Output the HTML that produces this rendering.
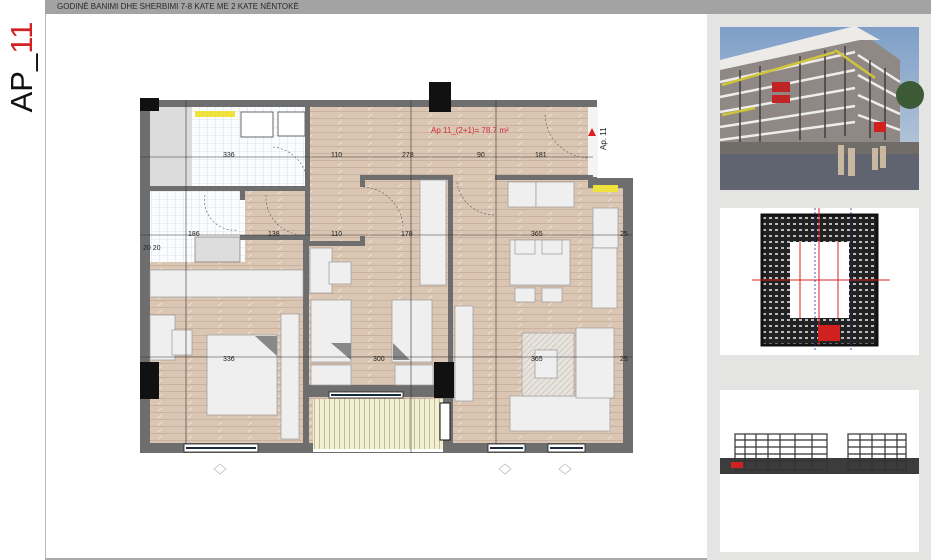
<!DOCTYPE html>
<html><head><meta charset="utf-8"><style>
html,body{margin:0;padding:0;background:#fff;width:950px;height:560px;overflow:hidden;font-family:"Liberation Sans",sans-serif}
#hdr{position:absolute;left:45px;top:0;width:886px;height:14px;background:#a3a3a3;font-size:8px;line-height:14px;color:#2a2a2a;padding-left:12px;box-sizing:border-box}
#ap{position:absolute;left:-28px;top:52px;width:100px;height:30px;transform:rotate(-90deg);font-size:31px;line-height:30px;text-align:center;color:#111}
#ap span{color:#d42020}
#main{position:absolute;left:45px;top:14px;width:662px;height:544px;border-left:1px solid #bbb;border-bottom:2px solid #aaa}
#rp{position:absolute;left:707px;top:14px;width:224px;height:546px;background:#e4e4e3}
</style></head><body>
<div id="ap">AP_<span>11</span></div>
<div id="hdr">GODINË BANIMI DHE SHERBIMI 7-8 KATE ME 2 KATE NËNTOKË</div>
<div id="main"></div>
<div id="rp"></div>
<svg width="950" height="560" style="position:absolute;left:0;top:0">
<defs>
<pattern id="wood" width="30" height="7" patternUnits="userSpaceOnUse">
<rect width="30" height="7" fill="#dbc6b4"/><line x1="0" y1="6.5" x2="30" y2="6.5" stroke="#c4ad99" stroke-width="0.8"/><line x1="8" y1="5" x2="12" y2="2" stroke="#eee2d6" stroke-width="0.8"/>
</pattern>
<pattern id="tile" width="8" height="8" patternUnits="userSpaceOnUse"><rect width="8" height="8" fill="#fbfcfd"/><path d="M8 0V8M0 8H8" stroke="#bcd0de" stroke-width="0.6"/></pattern>
<pattern id="balc" width="5" height="10" patternUnits="userSpaceOnUse"><rect width="5" height="10" fill="#f3f0cf"/><line x1="4.5" y1="0" x2="4.5" y2="10" stroke="#9a9680" stroke-width="0.6"/></pattern>
<pattern id="hatch" width="6" height="6" patternUnits="userSpaceOnUse"><rect width="6" height="6" fill="#e7e3dc"/><path d="M0 6L6 0" stroke="#bbb" stroke-width="0.6"/></pattern>
<pattern id="dense" width="6" height="6" patternUnits="userSpaceOnUse"><rect width="6" height="6" fill="#222"/><rect x="1" y="1" width="3" height="2" fill="#bbb"/></pattern>
<linearGradient id="sky" x1="0" y1="0" x2="0" y2="1"><stop offset="0" stop-color="#7f9fc8"/><stop offset="1" stop-color="#c3d0de"/></linearGradient>
</defs>
<rect x="140" y="100" width="457" height="90" fill="#6e6e6e"/>
<rect x="140" y="178" width="493" height="275" fill="#6e6e6e"/>
<rect x="150" y="107" width="438" height="336" fill="url(#wood)"/>
<rect x="450" y="188" width="173" height="255" fill="url(#wood)"/>
<rect x="588" y="107" width="10" height="70" fill="#f4f4f4"/>
<rect x="150" y="107" width="158" height="79" fill="url(#tile)"/>
<rect x="150" y="107" width="42" height="79" fill="#dcdcdc"/>
<rect x="150" y="190" width="95" height="72" fill="url(#tile)"/>
<rect x="195" y="237" width="45" height="25" fill="#ddd" stroke="#666" stroke-width="0.6"/>
<rect x="241" y="112" width="32" height="25" fill="#fff" stroke="#444" stroke-width="0.8"/>
<rect x="278" y="112" width="27" height="24" fill="#fff" stroke="#444" stroke-width="0.8"/>
<rect x="195" y="111" width="40" height="6" fill="#efe23c"/>
<rect x="593" y="185" width="25" height="7" fill="#efe23c"/>
<rect x="305" y="107" width="5" height="135" fill="#6e6e6e"/>
<rect x="150" y="186" width="160" height="5" fill="#6e6e6e"/>
<rect x="240" y="190" width="5" height="10" fill="#6e6e6e"/>
<rect x="240" y="235" width="70" height="5" fill="#6e6e6e"/>
<rect x="303" y="240" width="6" height="205" fill="#6e6e6e"/>
<rect x="360" y="175" width="88" height="5" fill="#6e6e6e"/>
<rect x="360" y="175" width="5" height="12" fill="#6e6e6e"/>
<rect x="360" y="236" width="5" height="10" fill="#6e6e6e"/>
<rect x="309" y="241" width="56" height="5" fill="#6e6e6e"/>
<rect x="448" y="175" width="5" height="270" fill="#6e6e6e"/>
<rect x="495" y="175" width="98" height="5" fill="#6e6e6e"/>
<rect x="309" y="385" width="139" height="12" fill="#6e6e6e"/>
<rect x="313" y="399" width="130" height="50" fill="url(#balc)"/>
<rect x="313" y="449" width="130" height="3" fill="#fff"/>
<rect x="443" y="388" width="8" height="65" fill="#6e6e6e"/>
<rect x="440" y="403" width="10" height="37" fill="#fff" stroke="#111" stroke-width="1"/>
<rect x="140" y="98" width="19" height="13" fill="#111"/>
<rect x="429" y="82" width="22" height="30" fill="#111"/>
<rect x="140" y="362" width="19" height="37" fill="#111"/>
<rect x="434" y="362" width="20" height="36" fill="#111"/>
<g fill="#efefef" stroke="#9a9a9a" stroke-width="0.7">
<rect x="150" y="270" width="153" height="27"/>
<rect x="150" y="315" width="25" height="45"/>
<rect x="172" y="330" width="20" height="25"/>
<rect x="207" y="335" width="70" height="80"/>
<rect x="281" y="314" width="18" height="125"/>
<rect x="310" y="248" width="22" height="45"/>
<rect x="329" y="262" width="22" height="22"/>
<rect x="311" y="300" width="40" height="62"/>
<rect x="311" y="365" width="40" height="20"/>
<rect x="392" y="300" width="40" height="62"/>
<rect x="395" y="365" width="38" height="20"/>
<rect x="420" y="180" width="26" height="105"/>
<rect x="508" y="182" width="28" height="25"/>
<rect x="536" y="182" width="38" height="25"/>
<rect x="593" y="208" width="25" height="40"/>
<rect x="592" y="248" width="25" height="60"/>
<rect x="510" y="240" width="60" height="45"/>
<rect x="515" y="240" width="20" height="14"/>
<rect x="542" y="240" width="20" height="14"/>
<rect x="515" y="288" width="20" height="14"/>
<rect x="542" y="288" width="20" height="14"/>
<rect x="455" y="306" width="18" height="95"/>
<rect x="510" y="396" width="100" height="35"/>
<rect x="576" y="328" width="38" height="70"/>
</g>
<rect x="522" y="333" width="52" height="63" fill="url(#hatch)" stroke="#9a9a9a" stroke-width="0.6"/>
<rect x="535" y="350" width="22" height="28" fill="#efefef" stroke="#888" stroke-width="0.6"/>
<g fill="#888"><path d="M255 336L277 336L277 356Z"/><path d="M331 343L351 343L351 360Z"/><path d="M393 343L410 360L393 360Z"/></g>
<g stroke="#333" stroke-width="0.6" fill="none">
<line x1="140" y1="157" x2="593" y2="157"/>
<line x1="140" y1="235" x2="632" y2="235"/>
<line x1="140" y1="357" x2="632" y2="357"/>
<line x1="186" y1="100" x2="186" y2="453"/>
<line x1="411" y1="100" x2="411" y2="453"/>
<line x1="496" y1="100" x2="496" y2="453"/>
</g>
<g stroke="#555" stroke-width="0.6" fill="none" stroke-dasharray="2 2">
<path d="M273 147A38 38 0 0 1 307 180"/><path d="M205 195A30 30 0 0 0 238 230"/><path d="M266 195A38 38 0 0 0 305 235"/>
<path d="M363 187A42 42 0 0 1 403 226"/><path d="M457 182A38 38 0 0 0 495 215"/><path d="M545 115A45 45 0 0 0 588 158"/>
</g>
<g font-size="7" fill="#222" font-family="Liberation Sans Narrow, Liberation Sans, sans-serif">
<text x="223" y="157">336</text><text x="331" y="157">110</text><text x="402" y="157">278</text><text x="477" y="157">90</text><text x="535" y="157">181</text>
<text x="188" y="236">186</text><text x="268" y="236">138</text><text x="331" y="236">110</text><text x="401" y="236">178</text><text x="531" y="236">365</text><text x="620" y="236">25</text>
<text x="223" y="361">336</text><text x="373" y="361">300</text><text x="531" y="361">365</text><text x="620" y="361">25</text>
<text x="143" y="250">20 20</text>
</g>
<text x="431" y="133" font-size="8" fill="#d42a3a" font-family="Liberation Sans Narrow, Liberation Sans, sans-serif">Ap 11_(2+1)= 78.7 m²</text>
<path d="M592 128l4 8h-8z" fill="#e02020"/>
<text x="0" y="0" font-size="8" fill="#222" transform="translate(606,150) rotate(-90)">Ap. 11</text>
<g fill="#fff" stroke="#222" stroke-width="0.8">
<rect x="184" y="444" width="74" height="8"/><rect x="488" y="444" width="37" height="8"/><rect x="548" y="444" width="37" height="8"/><rect x="329" y="392" width="74" height="6"/>
</g>
<g stroke="#1a2a40" stroke-width="2"><line x1="186" y1="448" x2="256" y2="448"/><line x1="490" y1="448" x2="523" y2="448"/><line x1="550" y1="448" x2="583" y2="448"/><line x1="331" y1="395" x2="401" y2="395"/></g>
<g fill="none" stroke="#bbb" stroke-width="0.8"><path d="M220 464l6 5-6 5-6-5z"/><path d="M505 464l6 5-6 5-6-5z"/><path d="M565 464l6 5-6 5-6-5z"/></g>
<!-- photo -->
<rect x="720" y="27" width="199" height="163" fill="url(#sky)"/>
<path d="M720 62L790 45L855 28L900 60L900 150L720 150Z" fill="#8f8884"/>
<path d="M720 60L855 26L880 40L860 40L720 70Z" fill="#ecebe8"/>
<g stroke="#efedea" stroke-width="2.5"><line x1="720" y1="82" x2="855" y2="52"/><line x1="720" y1="97" x2="855" y2="70"/><line x1="720" y1="112" x2="855" y2="88"/><line x1="720" y1="127" x2="855" y2="106"/><line x1="720" y1="140" x2="855" y2="122"/><line x1="858" y1="55" x2="900" y2="82"/><line x1="858" y1="75" x2="900" y2="98"/><line x1="858" y1="95" x2="900" y2="114"/><line x1="858" y1="115" x2="900" y2="130"/></g>
<g stroke="#3e3d44" stroke-width="1.5"><line x1="740" y1="70" x2="740" y2="145"/><line x1="760" y1="66" x2="760" y2="143"/><line x1="800" y1="56" x2="800" y2="140"/><line x1="825" y1="50" x2="825" y2="138"/><line x1="845" y1="46" x2="845" y2="136"/><line x1="870" y1="60" x2="870" y2="138"/><line x1="885" y1="68" x2="885" y2="140"/></g>
<g stroke="#cfc43a" stroke-width="2.5"><line x1="722" y1="85" x2="835" y2="52"/><line x1="722" y1="115" x2="755" y2="108"/><line x1="835" y1="50" x2="875" y2="78"/></g>
<rect x="772" y="82" width="18" height="10" fill="#c02525"/><rect x="772" y="95" width="18" height="8" fill="#c02525"/><rect x="874" y="122" width="12" height="10" fill="#d02020"/>
<circle cx="910" cy="95" r="14" fill="#3c5a35"/>
<rect x="720" y="145" width="199" height="45" fill="#5f6470"/>
<rect x="720" y="142" width="199" height="12" fill="#706d68"/>
<g fill="#c9b8a0"><rect x="838" y="145" width="6" height="30"/><rect x="848" y="148" width="7" height="28"/><rect x="872" y="148" width="6" height="22"/><rect x="880" y="146" width="6" height="22"/></g>
<!-- site plan -->
<rect x="720" y="208" width="199" height="147" fill="#fff"/>
<rect x="762" y="215" width="115" height="130" fill="url(#dense)"/>
<rect x="790" y="242" width="59" height="76" fill="#fff"/>
<rect x="762" y="215" width="115" height="130" fill="none" stroke="#111" stroke-width="3"/>
<g stroke="#d82020" stroke-width="1"><line x1="819" y1="208" x2="819" y2="345"/><line x1="752" y1="280" x2="890" y2="280"/><line x1="800" y1="242" x2="800" y2="318"/><line x1="838" y1="242" x2="838" y2="318"/></g>
<g stroke="#2a2aa0" stroke-width="0.8" stroke-dasharray="2 2"><line x1="815" y1="208" x2="815" y2="350"/><line x1="851" y1="208" x2="851" y2="350"/></g>
<rect x="818" y="325" width="22" height="16" fill="#d02020"/>
<!-- elevation -->
<rect x="720" y="390" width="199" height="162" fill="#fff"/>
<rect x="720" y="458" width="199" height="16" fill="#3c3c3c"/>
<g fill="none" stroke="#333" stroke-width="1.2">
<rect x="735" y="434" width="92" height="36"/><rect x="848" y="434" width="58" height="36"/>
<path d="M735 440h92M735 447h92M735 454h92M735 461h92M848 440h58M848 447h58M848 454h58M848 461h58"/>
<path d="M745 434v36M756 434v36M768 434v36M780 434v36M795 434v36M812 434v36M860 434v36M872 434v36M885 434v36M897 434v36"/>
</g>
<rect x="731" y="462" width="12" height="6" fill="#d02020"/>
</svg>
</body></html>
